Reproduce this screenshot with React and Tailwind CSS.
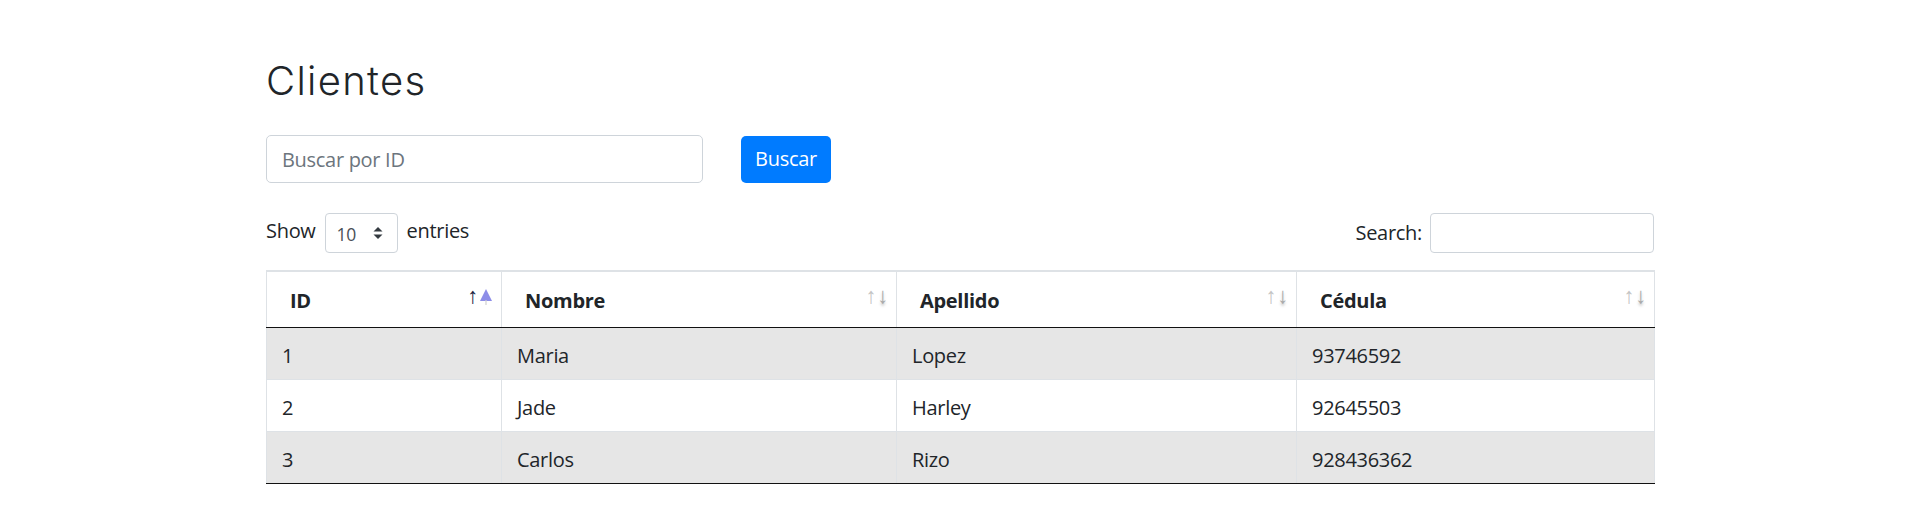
import React from "react";

const rows = [
  { id: "1", nombre: "Maria", apellido: "Lopez", cedula: "93746592" },
  { id: "2", nombre: "Jade", apellido: "Harley", cedula: "92645503" },
  { id: "3", nombre: "Carlos", apellido: "Rizo", cedula: "928436362" },
];

function SortIcons({ active }) {
  return (
    <span className="absolute right-[8px] top-[11px] flex items-start gap-[1px] leading-none">
      <span className={active ? "text-[22px] text-[#1c2340]" : "text-[22px] text-[#c4c4c4]"}>↑</span>
      {active ? (
        <svg width="14" height="18" viewBox="0 0 14 18" className="mt-[5px]">
          <path d="M7 1 L13 13 L1 13 Z" fill="#8d8de8" />
          <path d="M7 12 L7 17" stroke="#d0d0d0" strokeWidth="1.2" />
        </svg>
      ) : (
        <span className="text-[22px] text-[#a9a9a9] [text-shadow:0_2px_3px_rgba(0,0,0,0.25)]">↓</span>
      )}
    </span>
  );
}

export default function App() {
  const font = { fontFamily: "'Segoe UI', 'Open Sans', Arial, sans-serif" };
  return (
    <div className="min-h-[505px] w-full bg-white text-[#212529]" style={font}>
      <div className="mx-auto w-[1388px] pt-[57px]">
        <h2
          className="text-[40px] leading-[48px] font-light tracking-[1.3px] text-[#212529]"
          style={{ fontFamily: "Inter, 'Open Sans', sans-serif" }}
        >
          Clientes
        </h2>

        <div className="mt-[30px] flex items-center">
          <input
            type="text"
            placeholder="Buscar por ID"
            className="h-[48px] w-[437px] rounded-[5px] border border-[#ced4da] px-[15px] text-[20px] tracking-[-0.3px] text-[#495057] placeholder:text-[#6c757d] outline-none"
          />
          <button className="ml-[38px] h-[47px] w-[90px] rounded-[5px] bg-[#007bff] text-[20px] tracking-[-0.3px] text-white">
            Buscar
          </button>
        </div>

        <div className="mt-[30px] flex items-center justify-between">
          <div className="flex items-center text-[20px] tracking-[-0.3px]">
            <span className="-mt-[4px]">Show</span>
            <div className="relative mx-[9px] flex h-[40px] w-[73px] items-center rounded-[4px] border border-[#ced4da] pl-[11px] text-[17.5px] text-[#495057]">
              <span className="mt-[2px]">10</span>
              <svg
                className="absolute right-[14px] top-[12px]"
                width="10"
                height="14"
                viewBox="0 0 10 14"
              >
                <path d="M5 1 L9.5 5.5 L0.5 5.5 Z" fill="#343a40" />
                <path d="M5 13 L9.5 8.5 L0.5 8.5 Z" fill="#343a40" />
              </svg>
            </div>
            <span className="-mt-[4px]">entries</span>
          </div>
          <div className="flex items-center text-[20px] tracking-[-0.3px]">
            <span className="mr-[8px]">Search:</span>
            <input
              type="text"
              className="h-[40px] w-[224px] rounded-[4px] border border-[#ced4da] outline-none"
            />
          </div>
        </div>

        <table className="mt-[17px] w-[1388px] table-fixed border-collapse text-[20px] tracking-[-0.3px]">
          <colgroup>
            <col className="w-[235px]" />
            <col className="w-[395px]" />
            <col className="w-[400px]" />
            <col className="w-[358px]" />
          </colgroup>
          <thead>
            <tr className="h-[56px]">
              {["ID", "Nombre", "Apellido", "Cédula"].map((h, i) => (
                <th
                  key={h}
                  className="relative border-x border-t-2 border-b border-x-[#dee2e6] border-t-[#dee2e6] border-b-[#111] pl-[23px] pt-[4px] text-left align-middle font-bold"
                >
                  {h}
                  <SortIcons active={i === 0} />
                </th>
              ))}
            </tr>
          </thead>
          <tbody>
            {rows.map((r, idx) => {
              const bg = idx % 2 === 0 ? "bg-[#e6e6e6]" : "bg-white";
              const bb = idx === rows.length - 1 ? "border-b-[#111]" : "border-b-[#dee2e6]";
              const cls = `border-x border-b border-x-[#dee2e6] ${bb} px-[15px] pt-[13px] pb-[8px] leading-[30px] align-top`;
              return (
                <tr key={r.id} className={bg}>
                  <td className={cls}>{r.id}</td>
                  <td className={cls}>{r.nombre}</td>
                  <td className={cls}>{r.apellido}</td>
                  <td className={cls}>{r.cedula}</td>
                </tr>
              );
            })}
          </tbody>
        </table>
      </div>
    </div>
  );
}
